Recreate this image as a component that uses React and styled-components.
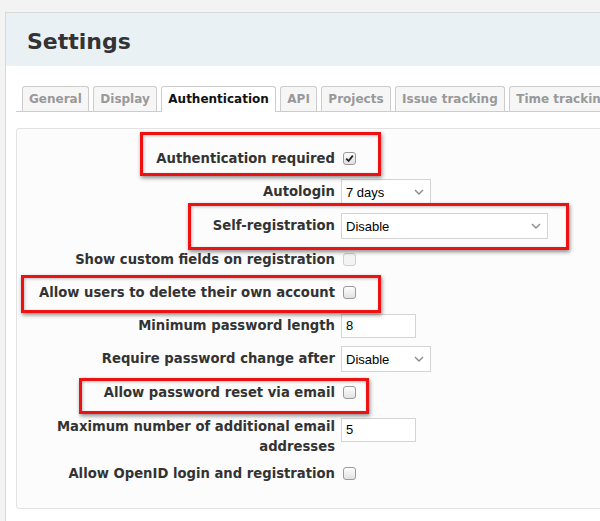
import React from 'react';
import styled, { createGlobalStyle } from 'styled-components';

const COLORS = {
  page:      '#f3f3f3',
  frame:     '#d9d9d9',
  header:    '#eaf1f5',
  text:      '#333333',
  tabText:   '#999999',
  tabBg:     '#f6f6f6',
  tabBorder: '#cccccc',
  boxBorder: '#e2e2e2',
  boxBg:     '#fcfcfc',
  field:     '#d4d4d4',
  red:       '#ee1111',
};

const GlobalStyle = createGlobalStyle`
  html, body { margin: 0; padding: 0; background: ${COLORS.page}; overflow: hidden; }
  * { box-sizing: border-box; }
`;

const Root = styled.div`
  position: relative;
  width: 600px;
  height: 521px;
  overflow: hidden;
  padding: 12px 0 0 5px;
  font-family: "DejaVu Sans", Verdana, sans-serif;
`;

const Frame = styled.div`
  width: 660px;
  min-height: 560px;
  background: #fff;
  border: 1px solid ${COLORS.frame};
`;

const Header = styled.header`
  height: 53px;
  background: ${COLORS.header};
  display: flex;
  align-items: center;
  padding: 3px 0 0 21px;
  h1 {
    margin: 0;
    font-size: 22px;
    font-weight: bold;
    color: ${COLORS.text};
  }
`;

const Content = styled.div`
  padding: 20px 0 0 10px;
`;

const TabBar = styled.ul`
  display: flex;
  gap: 4.5px;
  list-style: none;
  margin: 0;
  padding: 0 0 0 6px;
  height: 26px;
  border-bottom: 1px solid ${COLORS.tabBorder};
  white-space: nowrap;
`;

const Tab = styled.li`
  flex: none;
  height: ${p => (p.$active ? '26px' : '25px')};
  padding: 0 6px;
  border: 1px solid ${COLORS.tabBorder};
  border-bottom: none;
  border-radius: 3px 3px 0 0;
  background: ${p => (p.$active ? '#fff' : COLORS.tabBg)};
  color: ${p => (p.$active ? '#111' : COLORS.tabText)};
  font-size: 12px;
  font-weight: bold;
  line-height: 24px;
`;

const Box = styled.div`
  margin-top: 16px;
  border: 1px solid ${COLORS.boxBorder};
  border-radius: 3px;
  background: ${COLORS.boxBg};
  padding: 13px 0 18px;
`;

const Row = styled.div`
  display: flex;
  align-items: ${p => (p.$top ? 'flex-start' : 'center')};
  min-height: 33px;
  padding: ${p => (p.$top ? '4px 0 0' : '4px 0')};
`;

const Label = styled.label`
  flex: none;
  width: 318px;
  margin-right: 6px;
  padding-top: ${p => (p.$top ? '4px' : '0')};
  text-align: right;
  font-size: 13.2px;
  font-weight: bold;
  line-height: 20px;
  color: ${COLORS.text};
`;

const SelectBox = styled.div`
  display: flex;
  align-items: center;
  justify-content: space-between;
  width: ${p => p.$width}px;
  height: 26px;
  padding: 0 6px 0 4px;
  border: 1px solid ${COLORS.field};
  background: #fff;
  font-family: "Liberation Sans", Arial, sans-serif;
  font-size: 13px;
  color: #000;
`;

const TextInput = styled.div`
  width: 75px;
  height: 24px;
  margin-top: ${p => (p.$top ? '5px' : '0')};
  padding: 0 4px;
  border: 1px solid ${COLORS.field};
  background: #fff;
  font-family: "Liberation Sans", Arial, sans-serif;
  font-size: 13px;
  line-height: 22px;
  color: #000;
`;

const CheckBox = styled.span`
  display: inline-flex;
  align-items: center;
  justify-content: center;
  width: 13px;
  height: 13px;
  margin-left: 2px;
  border: 1px solid ${p => (p.$disabled ? '#cfcfcf' : '#9a9a9a')};
  border-radius: 3px;
  background: ${p => (p.$disabled ? '#f4f4f4' : 'linear-gradient(#fdfdfd, #e2e2e2)')};
`;

const Highlight = styled.div`
  position: absolute;
  border: 3px solid ${COLORS.red};
  box-shadow: 1px 2px 4px rgba(0, 0, 0, 0.45), inset 1px 1px 3px rgba(0, 0, 0, 0.25);
  pointer-events: none;
`;

const Chevron = () => (
  <svg width="10" height="6" viewBox="0 0 10 6">
    <path d="M1 1 L5 5 L9 1" fill="none" stroke="#8a8a8a" strokeWidth="1.4" />
  </svg>
);

const Check = () => (
  <svg width="9" height="9" viewBox="0 0 9 9">
    <path d="M1.2 4.6 L3.6 7 L7.8 1.6" fill="none" stroke="#222" strokeWidth="1.8" />
  </svg>
);

const Select = ({ width, value }) => (
  <SelectBox $width={width}>
    <span>{value}</span>
    <Chevron />
  </SelectBox>
);

const TABS = ['General', 'Display', 'Authentication', 'API', 'Projects', 'Issue tracking', 'Time tracking'];

const HIGHLIGHTS = [
  { left: 140, top: 132, width: 241, height: 44 },
  { left: 188, top: 203, width: 381, height: 47 },
  { left: 21,  top: 275, width: 360, height: 38 },
  { left: 79,  top: 378, width: 290, height: 36 },
];

export default function App() {
  return (
    <Root>
      <GlobalStyle />
      <Frame>
        <Header><h1>Settings</h1></Header>
        <Content>
          <TabBar>
            {TABS.map(t => (
              <Tab key={t} $active={t === 'Authentication'}>{t}</Tab>
            ))}
          </TabBar>
          <Box>
            <Row>
              <Label>Authentication required</Label>
              <CheckBox><Check /></CheckBox>
            </Row>
            <Row>
              <Label>Autologin</Label>
              <Select width={90} value="7 days" />
            </Row>
            <Row>
              <Label>Self-registration</Label>
              <Select width={207} value="Disable" />
            </Row>
            <Row>
              <Label>Show custom fields on registration</Label>
              <CheckBox $disabled />
            </Row>
            <Row>
              <Label>Allow users to delete their own account</Label>
              <CheckBox />
            </Row>
            <Row>
              <Label>Minimum password length</Label>
              <TextInput>8</TextInput>
            </Row>
            <Row>
              <Label>Require password change after</Label>
              <Select width={90} value="Disable" />
            </Row>
            <Row>
              <Label>Allow password reset via email</Label>
              <CheckBox />
            </Row>
            <Row $top>
              <Label $top>Maximum number of additional email addresses</Label>
              <TextInput $top>5</TextInput>
            </Row>
            <Row>
              <Label>Allow OpenID login and registration</Label>
              <CheckBox />
            </Row>
          </Box>
        </Content>
      </Frame>
      {HIGHLIGHTS.map((h, i) => (
        <Highlight key={i} style={h} />
      ))}
    </Root>
  );
}
